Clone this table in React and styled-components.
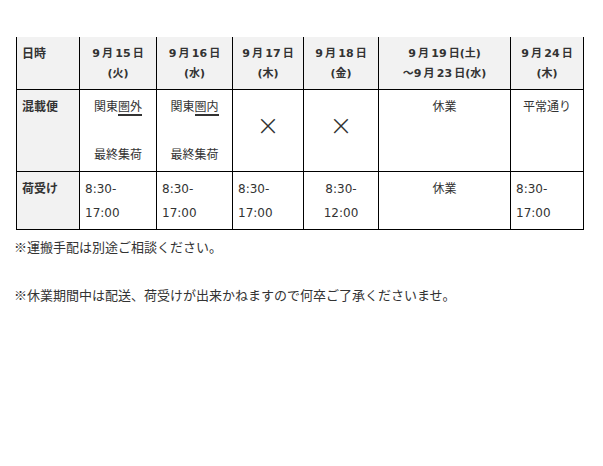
import React from 'react'
import styled, { createGlobalStyle } from 'styled-components'

const Global = createGlobalStyle`
  body {
    margin: 0;
    background: #fff;
    font-family: "DejaVu Sans", "Noto Sans CJK JP", sans-serif;
    color: #333;
  }
`

const COLS = [63, 77, 76, 71, 75, 132, 73]

// thin spaces between digits and kanji, as in the original
const d = (m, day) => `${m}\u2009月\u2009${day}\u2009日`

const HEAD = [d(9, 15), d(9, 16), d(9, 17), d(9, 18), null, d(9, 24)]
const DAYS = ['(火)', '(水)', '(木)', '(金)', null, '(木)']

function Schedule() {
  return (
    <Page>
      <Table>
        <colgroup>
          { COLS.map((w, i) => <col key={i} style={{ width: w }} />) }
        </colgroup>
        <tbody>
          <Row head>
            <Label>日時</Label>
            { HEAD.map((date, i) => (
              <Head key={i}>
                { date ? <>{ date }<br />{ DAYS[i] }</> : <>{ d(9, 19) }(土)<br />～{ d(9, 23) }(水)</> }
              </Head>
            )) }
          </Row>
          <Row>
            <Label>混載便</Label>
            <Cell center>関東<Mark>圏外</Mark><br /><br />最終集荷</Cell>
            <Cell center>関東<Mark>圏内</Mark><br /><br />最終集荷</Cell>
            <Cell center middle><Cross>×</Cross></Cell>
            <Cell center middle><Cross>×</Cross></Cell>
            <Cell center>休業</Cell>
            <Cell center>平常通り</Cell>
          </Row>
          <Row>
            <Label>荷受け</Label>
            <Cell>8:30-<br />17:00</Cell>
            <Cell>8:30-<br />17:00</Cell>
            <Cell>8:30-<br />17:00</Cell>
            <Cell center>8:30-<br />12:00</Cell>
            <Cell center>休業</Cell>
            <Cell>8:30-<br />17:00</Cell>
          </Row>
        </tbody>
      </Table>
      <Note>
        ※運搬手配は別途ご相談ください。<br /><br />
        ※休業期間中は配送、荷受けが出来かねますので何卒ご了承くださいませ。
      </Note>
    </Page>
  )
}

export default function App() {
  return (
    <>
      <Global />
      <Schedule />
    </>
  )
}

const Page = styled.div`
  padding: 37px 0 0 16px;
`

const Table = styled.table`
  border-collapse: collapse;
  table-layout: fixed;
  width: 567px;
  font-size: 12px;
  color: #333;
`

const Row = styled.tr`
  height: ${props => props.head ? '52px' : 'auto'};

  & > * {
    border: 1px solid #000;
    ${props => props.head && `
      border-top: none;
      background: #f2f2f2;
    `}
  }
`

const Label = styled.td`
  background: #f2f2f2;
  font-weight: bold;
  vertical-align: top;
  text-align: left;
  padding: 5px 5px 4px;
  line-height: 24px;

  tr:first-child > & {
    padding: 7px 5px 5px;
    line-height: 20px;
  }
`

const Head = styled.td`
  font-weight: bold;
  font-size: 11px;
  text-align: center;
  vertical-align: top;
  padding: 7px 2px 5px;
  line-height: 20px;
`

const Cell = styled.td`
  text-align: ${props => props.center ? 'center' : 'left'};
  vertical-align: ${props => props.middle ? 'middle' : 'top'};
  padding: 5px 5px 4px;
  line-height: 24px;
`

const Mark = styled.span`
  border-bottom: 2px solid #333;
`

const Cross = styled.span`
  display: inline-block;
  font-family: "DejaVu Sans", sans-serif;
  font-size: 28px;
  font-weight: 300;
  line-height: 28px;
  margin-top: -8px;
`

const Note = styled.p`
  margin: 5px 0 0 -2px;
  font-family: "Noto Sans CJK JP", sans-serif;
  font-size: 13px;
  line-height: 24px;
  color: #333;
`
